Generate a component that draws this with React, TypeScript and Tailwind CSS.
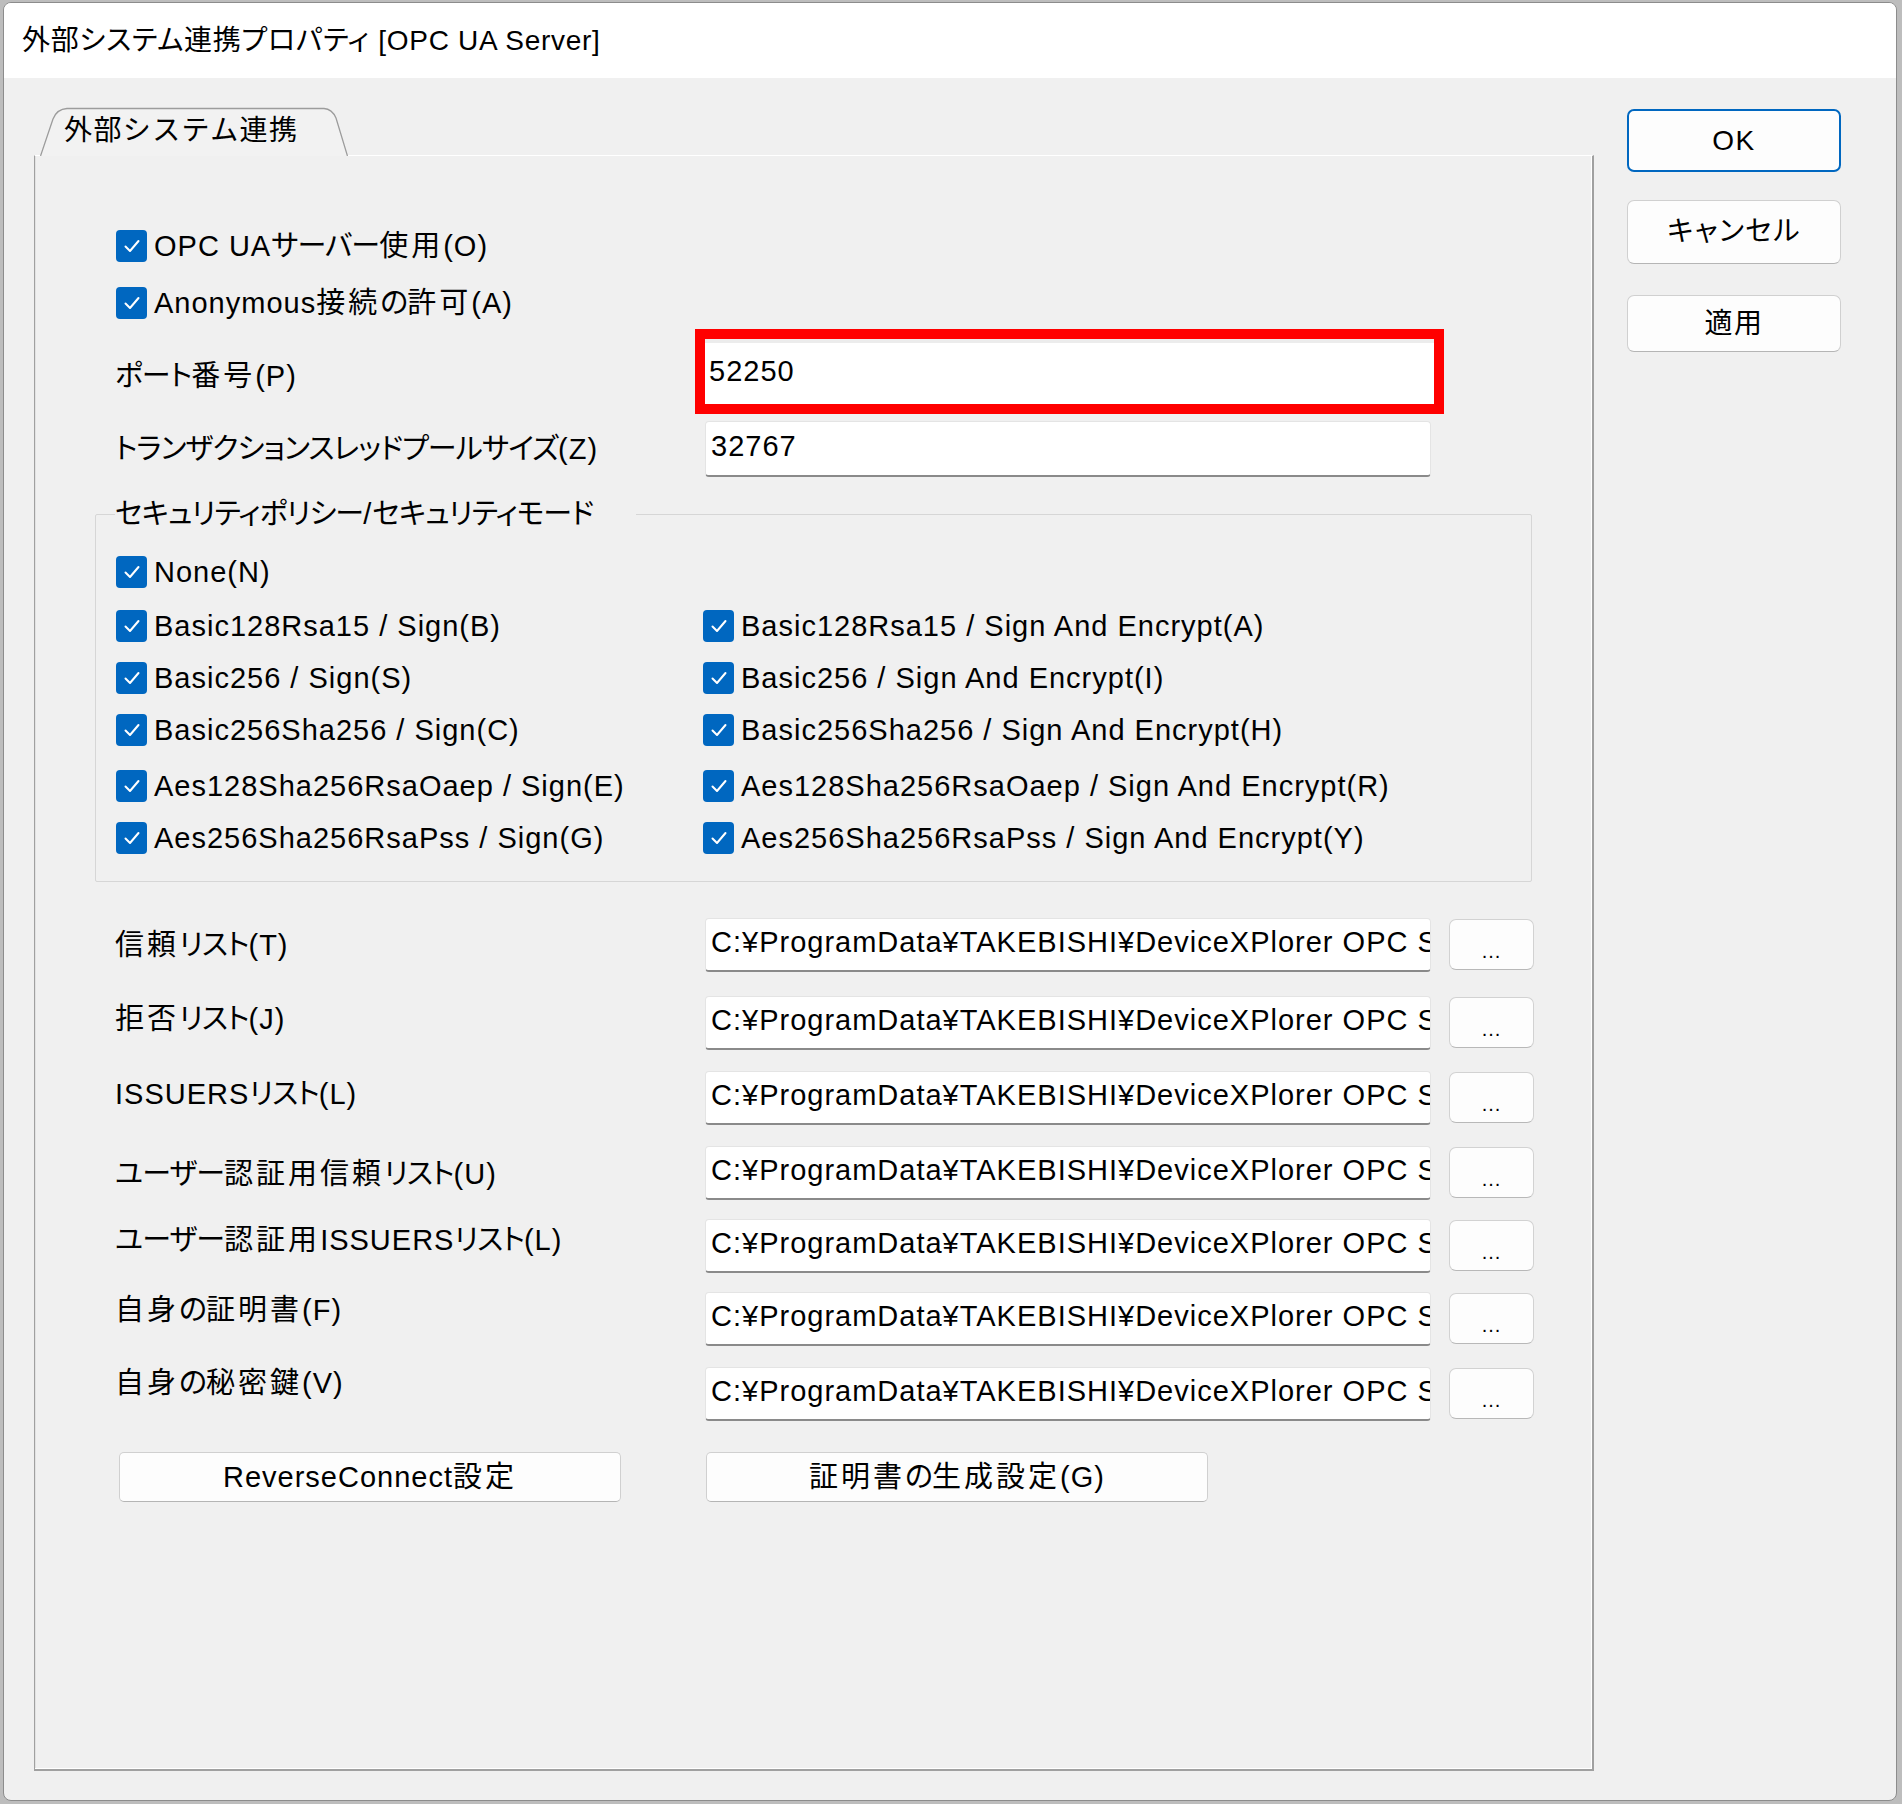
import React from "react";

const FONT = "font-['Liberation_Sans','Noto_Sans_CJK_JP',sans-serif]";

const KANA = /[\u3040-\u30ff]/;
const KANJI = /[\u3400-\u9fff]/;

function T({ s }: { s: string }) {
  const parts = s.match(/[\u3040-\u30ff]+|[\u3400-\u9fff]+|[^\u3040-\u30ff\u3400-\u9fff]+/g) || [];
  return (
    <>
      {parts.map((p, i) => {
        const cls = KANA.test(p) ? "tracking-[-0.9px]" : KANJI.test(p) ? "tracking-[3px]" : "tracking-[1px]";
        return (
          <span key={i} className={cls}>
            {p}
          </span>
        );
      })}
    </>
  );
}

function Box() {
  return (
    <span className="w-[31px] h-[32px] rounded-[4px] bg-[#0067c0] flex items-center justify-center shrink-0">
      <svg width="22" height="22" viewBox="0 0 22 22">
        <path d="M4.5 11.5 L9 16 L17.5 6" stroke="#ffffff" strokeWidth="2" fill="none" strokeLinecap="round" strokeLinejoin="round" />
      </svg>
    </span>
  );
}

function CheckItem({ label }: { label: string }) {
  return (
    <div className="flex items-center h-[32px]">
      <Box />
      <span className="ml-[7px] leading-[32px] whitespace-nowrap">
        <T s={label} />
      </span>
    </div>
  );
}

const PATH = "C:¥ProgramData¥TAKEBISHI¥DeviceXPlorer OPC S";

const pathRows = [
  { label: "信頼リスト(T)", gap: 36, lab: 11 },
  { label: "拒否リスト(J)", gap: 24, lab: 7 },
  { label: "ISSUERSリスト(L)", gap: 21, lab: 7 },
  { label: "ユーザー認証用信頼リスト(U)", gap: 21, lab: 12 },
  { label: "ユーザー認証用ISSUERSリスト(L)", gap: 19, lab: 5 },
  { label: "自身の証明書(F)", gap: 19, lab: 2 },
  { label: "自身の秘密鍵(V)", gap: 21, lab: 0 },
];

const pairs: [string, string | null, number][] = [
  ["None(N)", null, 22],
  ["Basic128Rsa15 / Sign(B)", "Basic128Rsa15 / Sign And Encrypt(A)", 22],
  ["Basic256 / Sign(S)", "Basic256 / Sign And Encrypt(I)", 20],
  ["Basic256Sha256 / Sign(C)", "Basic256Sha256 / Sign And Encrypt(H)", 20],
  ["Aes128Sha256RsaOaep / Sign(E)", "Aes128Sha256RsaOaep / Sign And Encrypt(R)", 24],
  ["Aes256Sha256RsaPss / Sign(G)", "Aes256Sha256RsaPss / Sign And Encrypt(Y)", 20],
];

export default function App() {
  return (
    <div
      className={`w-[1902px] h-[1804px] bg-[#bdbdbd] pt-[2px] pl-[3px] pr-[5px] pb-[3px] ${FONT} text-[29px] text-black [font-feature-settings:'palt']`}
    >
      <div className="h-full rounded-[8px] border border-[#8c8c8c] bg-[#f0f0f0] overflow-hidden flex flex-col">
        {/* title bar */}
        <div className="h-[75px] bg-white flex items-center pl-[18px] shrink-0">
          <span className="text-[28px] tracking-[0.7px] leading-[32px] whitespace-nowrap">
            外部システム連携プロパティ [OPC UA Server]
          </span>
        </div>

        <div className="flex flex-1">
          {/* left: tab control */}
          <div className="pl-[30px] pt-[29px] flex flex-col">
            <div className="relative ml-[6px] w-[308px] h-[48px] flex items-center pl-[24px]">
              <svg className="absolute inset-0" width="308" height="49" viewBox="0 0 308 49">
                <path
                  d="M0.5 49 L13 12 Q17 2 27 1.5 L284 1.5 Q292 2 296 11 L307.5 49"
                  fill="#f2f2f2"
                  stroke="#9c9c9c"
                  strokeWidth="1.3"
                />
              </svg>
              <span className="relative text-[28px] tracking-[1.4px] leading-[32px] whitespace-nowrap [font-feature-settings:normal]">
                外部システム連携
              </span>
            </div>

            <div className="w-[1560px] h-[1616px] border-l border-l-[#a0a0a0] border-t border-t-white border-r-2 border-r-[#a0a0a0] border-b-2 border-b-[#a0a0a0] shadow-[inset_-1px_-1px_0_#ffffff,inset_1px_0_0_#e2e2e2] pl-[60px] flex flex-col">
              {/* checkboxes */}
              <div className="pl-[21px] mt-[74px]">
                <CheckItem label="OPC UAサーバー使用(O)" />
              </div>
              <div className="pl-[21px] mt-[25px]">
                <CheckItem label="Anonymous接続の許可(A)" />
              </div>

              {/* port */}
              <div className="pl-[20px] mt-[10px] flex items-center h-[85px]">
                <div className="w-[580px] leading-[32px] pt-[8px] whitespace-nowrap">
                  <T s="ポート番号(P)" />
                </div>
                <div className="w-[749px] h-[85px] border-[10px] border-[#ff0000] bg-[#ececec] pt-[4px]">
                  <div className="h-full bg-white flex items-center pl-[4px] pb-[6px] leading-[32px] tracking-[1px]">
                    52250
                  </div>
                </div>
              </div>

              {/* transaction */}
              <div className="pl-[20px] mt-[7px] flex items-center h-[56px]">
                <div className="w-[590px] leading-[32px] whitespace-nowrap">
                  <T s="トランザクションスレッドプールサイズ(Z)" />
                </div>
                <div className="w-[726px] h-[56px] rounded-[4px] bg-white border border-[#e4e4e4] border-b-2 border-b-[#8a8a8a] flex items-center pl-[5px] pb-[6px] leading-[32px] tracking-[1px]">
                  32767
                </div>
              </div>

              {/* security group */}
              <fieldset className="mt-[17px] w-[1437px] h-[388px] border border-[#d6d6d6] rounded-[2px] px-[20px] pb-[27px] pt-0 m-0 min-w-0">
                <legend className="ml-[-1px] pr-[43px] pl-0 leading-[40px] whitespace-nowrap">
                  <T s="セキュリティポリシー/セキュリティモード" />
                </legend>
                {pairs.map(([l, r, g]) => (
                  <div key={l} className="flex" style={{ marginTop: g }}>
                    <div className="w-[587px]">
                      <CheckItem label={l} />
                    </div>
                    {r && <CheckItem label={r} />}
                  </div>
                ))}
              </fieldset>

              {/* path rows */}
              {pathRows.map((row) => (
                <div key={row.label} className="pl-[20px] flex items-start" style={{ marginTop: row.gap }}>
                  <div className="w-[590px] leading-[32px] whitespace-nowrap" style={{ marginTop: row.lab }}>
                    <T s={row.label} />
                  </div>
                  <div className="w-[726px] h-[54px] rounded-[4px] bg-white border border-[#e4e4e4] border-b-2 border-b-[#8a8a8a] flex items-center pl-[5px] pb-[6px] overflow-hidden">
                    <span className="leading-[32px] whitespace-nowrap tracking-[1px]">{PATH}</span>
                  </div>
                  <div className="ml-[18px] mt-[1px] w-[85px] h-[51px] rounded-[7px] bg-[#fdfdfd] border border-[#d2d2d2] border-b-[#b8b8b8] flex items-end justify-center pb-[8px] text-[20px] leading-[20px] tracking-[1px]">
                    ...
                  </div>
                </div>
              ))}

              {/* bottom buttons */}
              <div className="pl-[24px] mt-[31px] flex">
                <div className="w-[502px] h-[50px] rounded-[5px] bg-[#fdfdfd] border border-[#d0d0d0] border-b-[#b5b5b5] flex items-center justify-center leading-[32px] whitespace-nowrap">
                  <T s="ReverseConnect設定" />
                </div>
                <div className="ml-[85px] w-[502px] h-[50px] rounded-[5px] bg-[#fdfdfd] border border-[#d0d0d0] border-b-[#b5b5b5] flex items-center justify-center leading-[32px] whitespace-nowrap">
                  <T s="証明書の生成設定(G)" />
                </div>
              </div>
            </div>
          </div>

          {/* right: dialog buttons */}
          <div className="ml-[33px] pt-[31px] flex flex-col text-[28px] tracking-[1.4px]">
            <div className="w-[214px] h-[63px] rounded-[7px] bg-[#fdfdfd] border-2 border-[#0067c0] flex items-center justify-center leading-[32px]">
              OK
            </div>
            <div className="mt-[28px] w-[214px] h-[64px] rounded-[7px] bg-[#fdfdfd] border border-[#d0d0d0] border-b-[#b5b5b5] flex items-center justify-center leading-[32px]">
              キャンセル
            </div>
            <div className="mt-[31px] w-[214px] h-[57px] rounded-[7px] bg-[#fdfdfd] border border-[#d0d0d0] border-b-[#b5b5b5] flex items-center justify-center leading-[32px]">
              適用
            </div>
          </div>
        </div>
      </div>
    </div>
  );
}
